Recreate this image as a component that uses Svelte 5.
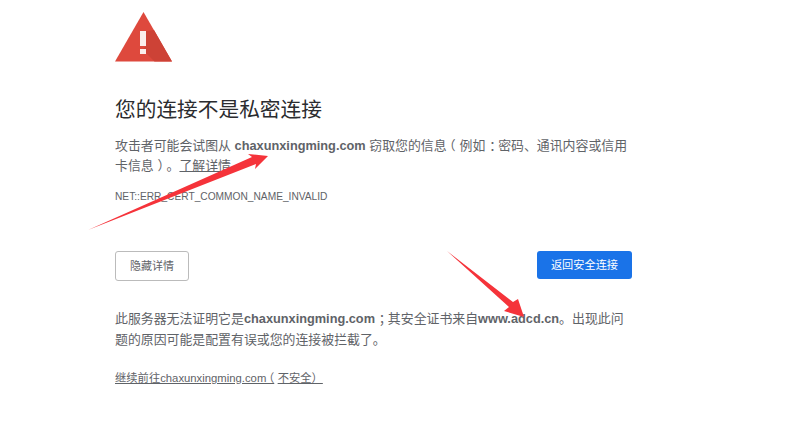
<script>
  const domain = 'chaxunxingming.com';
</script>

<main class="page">
  <svg class="icon" viewBox="0 0 57 50" width="57" height="50" aria-hidden="true">
    <polygon points="28.5,0 57,49.5 0,49.5" fill="#de493d" />
    <polygon points="31,19 31,34 28,37 31,41 39.5,49.5 57,49.5 39,18 33,19" fill="#cd4236" />
    <rect x="25" y="19" width="6" height="15" fill="#fbeeec" />
    <rect x="25" y="37" width="6" height="5" fill="#fbeeec" />
  </svg>

  <h1>您的连接不是私密连接</h1>

  <p class="intro">攻击者可能会试图从 <strong>{domain}</strong> 窃取您的信息<span class="pull-left">（</span>例如<span class="pull-right">：</span>密码、通讯内容或信用卡信息<span class="pull-right">）</span>。<a href="#learn">了解详情</a></p>

  <div class="code">NET::ERR_CERT_COMMON_NAME_INVALID</div>

  <div class="actions">
    <button class="secondary">隐藏详情</button>
    <button class="primary">返回安全连接</button>
  </div>

  <p class="details">此服务器无法证明它是<strong>{domain}</strong><span class="pull-right">；</span>其安全证书来自<strong>www.adcd.cn</strong>。出现此问题的原因可能是配置有误或您的连接被拦截了。</p>

  <a class="proceed" href="#proceed">继续前往{domain}<span class="pull-left">（</span>不安全）</a>
</main>

<svg class="arrows" viewBox="0 0 789 441" width="789" height="441" aria-hidden="true">
  <polygon points="88,230 252,157 248,154 268,156 255,169 256,164" fill="#f5333a" />
  <polygon points="447,251 513,302 518,299 524,317 504,311 509,307" fill="#f5333a" />
</svg>

<style>
  :global(body) {
    background: #fff;
  }

  .page {
    box-sizing: border-box;
    width: 517px;
    margin-left: 115px;
    padding-top: 12px;
    color: #5f6368;
    font-family: "Liberation Sans", Arial, "Noto Sans CJK SC", sans-serif;
    font-size: 12.9px;
    line-height: 20px;
    text-spacing-trim: space-all;
  }

  .icon {
    display: block;
  }

  h1 {
    margin: 34px 0 0;
    color: #2b2c2f;
    font-size: 20.7px;
    font-weight: 400;
    line-height: 27px;
  }

  .intro {
    margin: 13px 0 0;
  }

  strong {
    font-size: 12.75px;
    font-weight: 700;
  }

  .intro a {
    color: #5f6368;
  }

  /* full-width punctuation sits centred in its box in the reference */
  .pull-left {
    margin: 0 0.3em 0 -0.3em;
  }

  .pull-right {
    margin: 0 -0.3em 0 0.3em;
  }

  .code {
    margin-top: 12px;
    font-size: 10.2px;
    line-height: 18px;
    text-transform: uppercase;
  }

  .actions {
    display: flex;
    justify-content: space-between;
    align-items: flex-start;
    margin-top: 45px;
  }

  button {
    box-sizing: border-box;
    border-radius: 3px;
    font-family: inherit;
    font-size: 11px;
    line-height: 14px;
    padding: 0;
  }

  .secondary {
    width: 74px;
    height: 30px;
    border: 1px solid #bbbbbb;
    background: #fff;
    color: #5f6368;
  }

  .primary {
    width: 95px;
    height: 28px;
    border: none;
    background: #1a73e8;
    color: #fff;
    font-size: 11.2px;
  }

  .details {
    margin: 27px 0 0;
    line-height: 21px;
  }

  .proceed {
    display: inline-block;
    margin-top: 20px;
    color: #5f6368;
    font-size: 11.3px;
    line-height: 16px;
    white-space: nowrap;
  }

  .arrows {
    position: absolute;
    top: 0;
    left: 0;
    pointer-events: none;
  }
</style>
